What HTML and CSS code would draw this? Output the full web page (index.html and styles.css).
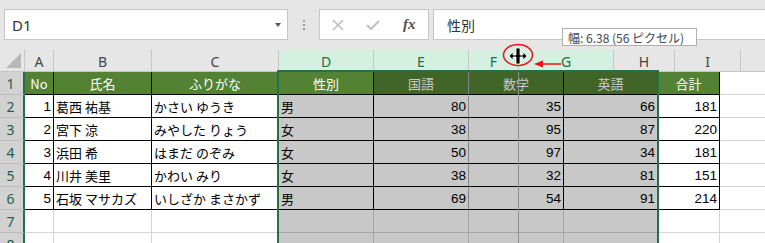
FILE: index.html
```html
<!DOCTYPE html>
<html lang="ja">
<head>
<meta charset="utf-8">
<link rel="stylesheet" href="styles.css">
</head>
<body>
<div class="toolbar">
  <div class="namebox"><span class="nb-text">D1</span><span class="dd"></span></div>
  <div class="grip"><i></i><i></i><i></i></div>
  <div class="btns">
    <svg class="ico" width="14" height="14" viewBox="0 0 14 14"><path d="M2 2 L12 12 M12 2 L2 12" stroke="#bdbdbd" stroke-width="1.6" fill="none"/></svg>
    <svg class="ico" width="16" height="14" viewBox="0 0 16 14"><path d="M2 7 L6 11 L14 3" stroke="#c2c2c2" stroke-width="2.2" fill="none"/></svg>
    <span class="fx">fx</span>
  </div>
  <div class="formula">性別</div>
</div>

<div class="sheet">
  <div class="colhdr">
    <div class="ch corner"><span class="tri"></span></div>
    <div class="ch w-a">A</div>
    <div class="ch w-b">B</div>
    <div class="ch w-c">C</div>
    <div class="ch sel w-d">D</div>
    <div class="ch sel w-e">E</div>
    <div class="ch sel w-hf">F</div>
    <div class="ch sel w-hg">G</div>
    <div class="ch w-hh">H</div>
    <div class="ch w-hi">I</div>
    <div class="ch w-rest"></div>
  </div>

  <div class="grid">
    <!-- row 1 -->
    <div class="rh">1</div>
    <div class="c hd ctr">No</div>
    <div class="c hd ctr">氏名</div>
    <div class="c hd ctr">ふりがな</div>
    <div class="c hd ctr">性別</div>
    <div class="c hd sh ctr gr">国語</div>
    <div class="c hd sh ctr">数学</div>
    <div class="c hd sh ctr">英語</div>
    <div class="c hd ctr">合計</div>
    <div class="c blank"></div>
    <!-- row 2 -->
    <div class="rh">2</div>
    <div class="c num">1</div>
    <div class="c">葛西 祐基</div>
    <div class="c">かさい ゆうき</div>
    <div class="c sd">男</div>
    <div class="c sd num gr">80</div>
    <div class="c sd num">35</div>
    <div class="c sd num">66</div>
    <div class="c num">181</div>
    <div class="c blank"></div>
    <!-- row 3 -->
    <div class="rh">3</div>
    <div class="c num">2</div>
    <div class="c">宮下 涼</div>
    <div class="c">みやした りょう</div>
    <div class="c sd">女</div>
    <div class="c sd num gr">38</div>
    <div class="c sd num">95</div>
    <div class="c sd num">87</div>
    <div class="c num">220</div>
    <div class="c blank"></div>
    <!-- row 4 -->
    <div class="rh">4</div>
    <div class="c num">3</div>
    <div class="c">浜田 希</div>
    <div class="c">はまだ のぞみ</div>
    <div class="c sd">女</div>
    <div class="c sd num gr">50</div>
    <div class="c sd num">97</div>
    <div class="c sd num">34</div>
    <div class="c num">181</div>
    <div class="c blank"></div>
    <!-- row 5 -->
    <div class="rh">5</div>
    <div class="c num">4</div>
    <div class="c">川井 美里</div>
    <div class="c">かわい みり</div>
    <div class="c sd">女</div>
    <div class="c sd num gr">38</div>
    <div class="c sd num">32</div>
    <div class="c sd num">81</div>
    <div class="c num">151</div>
    <div class="c blank"></div>
    <!-- row 6 -->
    <div class="rh">6</div>
    <div class="c num">5</div>
    <div class="c">石坂 マサカズ</div>
    <div class="c">いしざか まさかず</div>
    <div class="c sd">男</div>
    <div class="c sd num gr">69</div>
    <div class="c sd num">54</div>
    <div class="c sd num">91</div>
    <div class="c num">214</div>
    <div class="c blank"></div>
    <!-- row 7 -->
    <div class="rh">7</div>
    <div class="c e"></div>
    <div class="c e"></div>
    <div class="c e"></div>
    <div class="c es"></div>
    <div class="c es"></div>
    <div class="c es"></div>
    <div class="c es"></div>
    <div class="c e"></div>
    <div class="c blank"></div>
    <!-- row 8 -->
    <div class="rh">8</div>
    <div class="c e"></div>
    <div class="c e"></div>
    <div class="c e"></div>
    <div class="c es"></div>
    <div class="c es"></div>
    <div class="c es"></div>
    <div class="c es"></div>
    <div class="c e"></div>
    <div class="c blank"></div>
  </div>

  <div class="selbox"></div>
  <div class="guide"></div>
</div>

<div class="tooltip">幅: 6.38 (56 ピクセル)</div>

<svg class="marker" width="80" height="40" viewBox="0 0 80 40">
  <ellipse cx="18" cy="14" rx="14.5" ry="10.5" fill="none" stroke="#e8141b" stroke-width="1.5"/>
  <!-- resize cursor -->
  <path d="M9 15 L13 11 L13 14 L16 14 L16 7 L20 7 L20 14 L23 14 L23 11 L27 15 L23 19 L23 16 L20 16 L20 23 L16 23 L16 16 L13 16 L13 19 Z" fill="#000" stroke="#fff" stroke-width="0.8"/>
  <!-- red arrow -->
  <path d="M42 23 L61 23" stroke="#e8141b" stroke-width="1.5"/>
  <path d="M34 23 L43 19.5 L43 26.5 Z" fill="#e8141b"/>
</svg>
</body>
</html>
```

FILE: styles.css
```css
* { box-sizing: border-box; }
html, body { margin: 0; padding: 0; }
body {
  width: 765px;
  height: 243px;
  overflow: hidden;
  background: #ffffff;
  position: relative;
  font-family: "Noto Sans CJK JP", "Noto Sans", sans-serif;
}

/* ---------- toolbar ---------- */
.toolbar {
  height: 50px;
  background: #e6e6e6;
  display: flex;
  align-items: flex-start;
  padding: 9px 0 0 4px;
}
.namebox {
  width: 284px;
  height: 31px;
  background: #fff;
  border: 1px solid #c6c6c6;
  display: flex;
  align-items: center;
  padding-left: 7px;
}
.nb-text {
  font-family: "Noto Sans", sans-serif;
  font-size: 15px;
  color: #333;
}
.dd {
  margin-left: auto;
  margin-right: 6px;
  width: 0; height: 0;
  border-left: 3.5px solid transparent;
  border-right: 3.5px solid transparent;
  border-top: 4px solid #5a5a5a;
}
.grip {
  width: 31px;
  height: 31px;
  display: flex;
  flex-direction: column;
  align-items: center;
  justify-content: center;
  gap: 2px;
  padding-left: 1px;
}
.grip i {
  display: block;
  width: 2px; height: 2px;
  background: #9a9a9a;
}
.btns {
  width: 110px;
  height: 31px;
  background: #fff;
  border: 1px solid #c6c6c6;
  display: flex;
  align-items: center;
  padding-left: 11px;
  gap: 20px;
}
.fx {
  font-family: "Liberation Serif", serif;
  font-style: italic;
  font-weight: bold;
  font-size: 15px;
  color: #505050;
  margin-left: 2px;
}
.formula {
  flex: 1;
  margin-left: 4px;
  margin-right: -10px;
  height: 31px;
  background: #fff;
  border: 1px solid #c6c6c6;
  font-size: 14px;
  color: #333;
  display: flex;
  align-items: center;
  padding-left: 13px;
}

/* ---------- sheet ---------- */
.sheet { position: relative; }
.colhdr {
  display: flex;
  height: 22px;
  background: #e6e6e6;
}
.ch {
  height: 22px;
  border-right: 1px solid #c6c6c6;
  border-bottom: 1px solid #c6c6c6;
  font-family: "Noto Sans", sans-serif;
  font-size: 14px;
  color: #444;
  display: flex;
  align-items: center;
  justify-content: center;
  padding-top: 1px;
}
.ch.sel {
  background: #d3f0e0;
  color: #1f6e49;
  border-bottom: 1px solid #217346;
}
.corner { width: 25px; position: relative; }
.tri {
  position: absolute;
  right: 3px; bottom: 3px;
  width: 0; height: 0;
  border-left: 15px solid transparent;
  border-bottom: 15px solid #b7b7b7;
}
.w-a { width: 29px; }
.w-b { width: 98px; }
.w-c { width: 127px; }
.w-d { width: 95px; }
.w-e { width: 95px; }
.w-hf { width: 50px; }
.w-hg { width: 95px; }
.w-hh { width: 61px; }
.w-hi { width: 66px; }
.w-rest { flex: 1; border-right: none; }

.grid {
  display: grid;
  grid-template-columns: 25px 29px 98px 127px 95px 95px 95px 94px 62px 1fr;
  grid-auto-rows: 23px;
}
.rh {
  background: #d2d2d2;
  border-right: 2px solid #217346;
  border-bottom: 1px solid #bcbcbc;
  font-family: "Noto Sans", sans-serif;
  font-size: 14px;
  color: #23604a;
  display: flex;
  align-items: center;
  justify-content: center;
  padding-right: 2px;
}
.c {
  border-right: 1px solid #000;
  border-bottom: 1px solid #000;
  font-size: 13px;
  color: #000;
  display: flex;
  align-items: center;
  padding: 0 2px 0 2px;
  white-space: nowrap;
  overflow: hidden;
  background: #fff;
}
.c.num {
  justify-content: flex-end;
  font-family: "Liberation Sans", sans-serif;
  font-size: 13.5px;
  padding-right: 2px;
}
.c.ctr { justify-content: center; }
.c.hd { background: #548235; color: #fff; }
.c.hd.sh { background: #416528; color: #c9c9c9; }
.c.sd { background: #c8c8c8; }
.c.gr { border-right-color: #858585; }
.c.blank { border-right: none; border-bottom: 1px solid #d4d4d4; }
.c.e { border-right-color: #d4d4d4; border-bottom-color: #d4d4d4; }
.c.es { background: #c8c8c8; border-right-color: #a6a6a6; border-bottom-color: #a6a6a6; }

/* overlays */
.selbox {
  position: absolute;
  left: 277px;
  top: 20px;
  width: 382px;
  height: 240px;
  border: 2px solid #217346;
  border-bottom: none;
  pointer-events: none;
}
.guide {
  position: absolute;
  left: 518px;
  top: 22px;
  width: 1px;
  height: 230px;
  background: #8e8e8e;
}
.tooltip {
  position: absolute;
  left: 562px;
  top: 28px;
  width: 135px;
  height: 18px;
  background: #fff;
  border: 1px solid #b0b0b0;
  font-size: 12px;
  color: #3c4654;
  display: flex;
  align-items: center;
  padding-left: 5px;
  white-space: nowrap;
}
.marker {
  position: absolute;
  left: 500px;
  top: 41px;
}
```
